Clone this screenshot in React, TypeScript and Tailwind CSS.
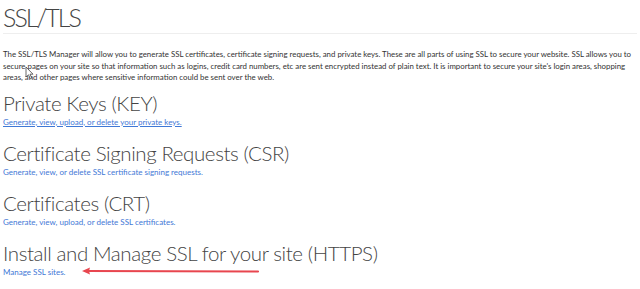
import React from "react";

const sections = [
  { title: "Private Keys (KEY)", link: "Generate, view, upload, or delete your private keys.", underline: true },
  { title: "Certificate Signing Requests (CSR)", link: "Generate, view, or delete SSL certificate signing requests." },
  { title: "Certificates (CRT)", link: "Generate, view, upload, or delete SSL certificates." },
  { title: "Install and Manage SSL for your site (HTTPS)", link: "Manage SSL sites.", arrow: true },
];

function Cursor() {
  return (
    <svg className="absolute left-[25px] top-[66px]" width="9" height="14" viewBox="0 0 9 14">
      <path d="M1 1 L1 11 L3.5 8.8 L5.3 12.8 L6.8 12.1 L5 8.2 L8 8.2 Z" fill="white" stroke="#444" strokeWidth="0.8" strokeLinejoin="round" />
    </svg>
  );
}

function Arrow() {
  return (
    <svg className="absolute left-[78px] top-[-1px]" width="180" height="12" viewBox="0 0 180 12">
      <line x1="6" y1="6" x2="177" y2="6.5" stroke="#e8464f" strokeWidth="2.2" strokeLinecap="round" />
      <path d="M1 6 L9 2.5 L8 6 L9 9.5 Z" fill="#e8464f" />
    </svg>
  );
}

export default function App() {
  return (
    <div className="relative w-[640px] h-[289px] overflow-hidden bg-white px-[3px] font-['Lato',sans-serif] text-[#333]">
      <h1 className="text-[25px] font-light leading-[33px] text-[#444] tracking-[-2px] pt-[1px]">SSL/TLS</h1>
      <hr className="border-[#eee] mt-[-1px]" />
      <p className="mt-[15px] text-[7.85px] leading-[11.5px]">
        The SSL/TLS Manager will allow you to generate SSL certificates, certificate signing requests, and private keys. These are all parts of using SSL to secure your website. SSL allows you to secure pages on your site so that information such as logins, credit card numbers, etc are sent encrypted instead of plain text. It is important to secure your site's login areas, shopping areas, and other pages where sensitive information could be sent over the web.
      </p>
      <Cursor />
      <div className="mt-[6px] flex flex-col gap-[12px]">
        {sections.map((s) => (
          <section key={s.title}>
            <h2 className="text-[20.5px] font-light leading-[26px] text-[#444] tracking-[-0.4px]">{s.title}</h2>
            <div className="relative">
              <a className={`block text-[8px] leading-[12px] text-[#3f78d6] ${s.underline ? "underline" : ""}`}>{s.link}</a>
              {s.arrow && <Arrow />}
            </div>
          </section>
        ))}
      </div>
    </div>
  );
}
